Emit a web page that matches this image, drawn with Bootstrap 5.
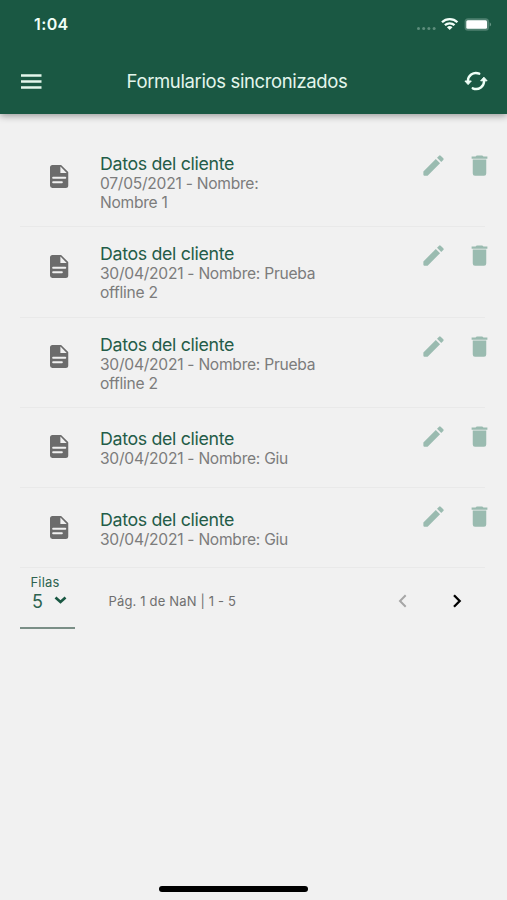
<!DOCTYPE html>
<html lang="es">
<head>
<meta charset="utf-8">
<meta name="viewport" content="width=device-width, initial-scale=1">
<title>Formularios sincronizados</title>
<link href="https://cdn.jsdelivr.net/npm/bootstrap@5.3.0/dist/css/bootstrap.min.css" rel="stylesheet">
<style>
body{font-family:Inter,"Liberation Sans",sans-serif;background:#f1f1f1;width:507px;height:900px;overflow:hidden}
svg{display:block;flex:none}
.app-head{height:114px;background:#1a5843;color:#e3f6ec;box-shadow:0 2px 7px rgba(0,0,0,.36)}
.status{height:48px;padding:0 15px 0 34px}
.clock{font-size:16px;font-weight:600;letter-spacing:.4px;color:#f0fff8}
.bar{height:66px;padding:0 19px 0 21px}
.bar-title{font-size:18.5px;line-height:24px;letter-spacing:-.37px;white-space:nowrap;margin-right:32px}
.forms{padding-top:23px}
.form-row{height:90.25px;padding:0 14.5px 0 50px;position:relative}
.form-row.short{height:80.25px}
.form-row::after{content:"";position:absolute;left:20px;right:22px;bottom:0;height:1px;background:#e9e9e9}
.doc{margin-top:27.5px;width:50px}
.info{width:240px;padding-top:1px}
.form-name{font-size:17.8px;line-height:21px;letter-spacing:-.33px;color:#245c48}
.form-sub{font-size:15.6px;line-height:19px;letter-spacing:-.26px;color:#7c7c7c}
.acts{padding-top:15px;gap:18.5px;color:#9abbb0}
.pager{height:61px}
.rows-field{width:55px;height:61px;margin-left:20px;border-bottom:2px solid #7b8f87;color:#2e6350}
.rows-label{font-size:13px;line-height:16px;letter-spacing:.2px;padding:6px 0 0 10.5px}
.rows-value{font-size:18px;line-height:24px;padding-left:12px;gap:11px}
.range{font-size:13px;letter-spacing:.16px;color:#6f6f6f;margin-left:33.5px;padding-top:6px;white-space:nowrap}
.pages{gap:43.5px;margin-right:45.5px;padding-top:5px}
.home-line{width:149px;height:6px;background:#000;margin:0 0 8px 158.5px}
</style>
<script src="https://cdn.jsdelivr.net/npm/bootstrap@5.3.0/dist/js/bootstrap.bundle.min.js"></script>
</head>
<body class="d-flex flex-column m-0">
<svg width="0" height="0" class="position-absolute">
<symbol id="doc" viewBox="0 0 18.5 23"><path fill="#6c6c6c" d="M2.5 0h8.6L18.5 7.2V20.6A2.4 2.4 0 0 1 16.1 23H2.4A2.4 2.4 0 0 1 0 20.600V2.500A2.500 2.500 0 0 1 2.500 0Z"/><path fill="#f1f1f1" d="M10.400 1.600V8.100H16.700Z"/><path d="M3.100 12.700H15.300M3.100 17.200H11.900" stroke="#f1f1f1" stroke-width="1.900" stroke-linecap="round"/></symbol>
<symbol id="edit" viewBox="0 0 24 24"><path fill="currentColor" d="M3 17.250V20.300Q3 21 3.700 21H6.750L17.810 9.940 14.060 6.190ZM20.710 7.040a1 1 0 0 0 0-1.410L18.370 3.290a1 1 0 0 0-1.410 0L15.130 5.120 18.880 8.870Z"/></symbol>
<symbol id="trash" viewBox="0 0 24 24"><path fill="currentColor" d="M6 19a2 2 0 0 0 2 2h8a2 2 0 0 0 2-2V6.600H6ZM19 4h-3.500l-1-1h-5l-1 1H5v1.900h14Z"/></symbol>
</svg>
<header class="app-head flex-shrink-0">
  <div class="status d-flex align-items-center justify-content-between">
    <span class="clock">1:04</span>
    <svg width="76" height="16" viewBox="0 0 76 16">
      <g fill="#5d8d7c"><circle cx="2.500" cy="12.500" r="1.500"/><circle cx="7.700" cy="12.500" r="1.500"/><circle cx="12.900" cy="12.500" r="1.500"/><circle cx="18.100" cy="12.500" r="1.500"/></g>
      <g fill="none" stroke="#f3fff9" stroke-width="2.300"><path d="M26 6.200a11 11 0 0 1 15.400 0M28.900 9.200a7 7 0 0 1 9.600 0"/></g>
      <path fill="#f3fff9" d="M30.900 11.200a4.200 4.200 0 0 1 5.600 0L33.700 14Z"/>
      <rect x="48.600" y="2.300" width="24.400" height="12.400" rx="3.500" fill="#4f8070"/><rect x="50.300" y="4.300" width="20.700" height="8.500" rx="1.500" fill="#fff"/><path d="M73.700 6.200a2.500 2.500 0 0 1 0 4.400Z" fill="#6b9889"/>
    </svg>
  </div>
  <nav class="bar d-flex align-items-center justify-content-between" aria-label="Principal">
    <svg width="21" height="15" viewBox="0 0 21 15" stroke="#e3f6ec" stroke-width="2.300"><path d="M0 1.500H20.500M0 7.500H20.500M0 13.500H20.500"/></svg>
    <span class="bar-title">Formularios sincronizados</span>
    <svg width="24" height="20" viewBox="0 0 24 20"><g fill="none" stroke="#effff7" stroke-width="2.400" stroke-linecap="round"><path d="M4 11A8 8 0 0 1 15.200 2.700M20 9A8 8 0 0 1 8.800 17.300"/></g><path fill="#effff7" stroke="#effff7" stroke-linejoin="round" d="M.900 10H7.300L4.100 13.600ZM16.700 9.800H23.100L19.900 6.200Z"/></svg>
  </nav>
</header>
<main class="flex-grow-1">
  <div class="forms">
    <div class="form-row d-flex"><div class="doc"><svg width="18.500" height="23"><use href="#doc"/></svg></div><div class="info align-self-center"><div class="form-name">Datos del cliente</div><div class="form-sub">07/05/2021 - Nombre:<br>Nombre 1</div></div><div class="acts d-flex ms-auto"><svg width="27" height="27"><use href="#edit"/></svg><svg width="27" height="27"><use href="#trash"/></svg></div></div>
    <div class="form-row d-flex"><div class="doc"><svg width="18.500" height="23"><use href="#doc"/></svg></div><div class="info align-self-center"><div class="form-name">Datos del cliente</div><div class="form-sub">30/04/2021 - Nombre: Prueba<br>offline 2</div></div><div class="acts d-flex ms-auto"><svg width="27" height="27"><use href="#edit"/></svg><svg width="27" height="27"><use href="#trash"/></svg></div></div>
    <div class="form-row d-flex"><div class="doc"><svg width="18.500" height="23"><use href="#doc"/></svg></div><div class="info align-self-center"><div class="form-name">Datos del cliente</div><div class="form-sub">30/04/2021 - Nombre: Prueba<br>offline 2</div></div><div class="acts d-flex ms-auto"><svg width="27" height="27"><use href="#edit"/></svg><svg width="27" height="27"><use href="#trash"/></svg></div></div>
    <div class="form-row short d-flex"><div class="doc"><svg width="18.500" height="23"><use href="#doc"/></svg></div><div class="info align-self-center"><div class="form-name">Datos del cliente</div><div class="form-sub">30/04/2021 - Nombre: Giu</div></div><div class="acts d-flex ms-auto"><svg width="27" height="27"><use href="#edit"/></svg><svg width="27" height="27"><use href="#trash"/></svg></div></div>
    <div class="form-row short d-flex"><div class="doc"><svg width="18.500" height="23"><use href="#doc"/></svg></div><div class="info align-self-center"><div class="form-name">Datos del cliente</div><div class="form-sub">30/04/2021 - Nombre: Giu</div></div><div class="acts d-flex ms-auto"><svg width="27" height="27"><use href="#edit"/></svg><svg width="27" height="27"><use href="#trash"/></svg></div></div>
  </div>
  <div class="pager d-flex align-items-center">
    <div class="rows-field">
      <div class="rows-label">Filas</div>
      <div class="rows-value d-flex align-items-center"><span>5</span><svg width="13" height="8" viewBox="0 0 13 8" class="mb-1"><path d="M1.500 1.500 6.500 6 11.500 1.500" fill="none" stroke="#1a5843" stroke-width="2.700"/></svg></div>
    </div>
    <span class="range">Pág. 1 de NaN | 1 - 5</span>
    <div class="pages d-flex ms-auto">
      <svg width="10" height="14" viewBox="0 0 10 14"><path d="M7.700 1.200 2 7 7.700 12.800" fill="none" stroke="#a6a6a6" stroke-width="2"/></svg>
      <svg width="10" height="14" viewBox="0 0 10 14"><path d="M2 1.200 7.700 7 2 12.800" fill="none" stroke="#000" stroke-width="2.300"/></svg>
    </div>
  </div>
</main>
<div class="home-line rounded-pill flex-shrink-0"></div>
</body>
</html>
